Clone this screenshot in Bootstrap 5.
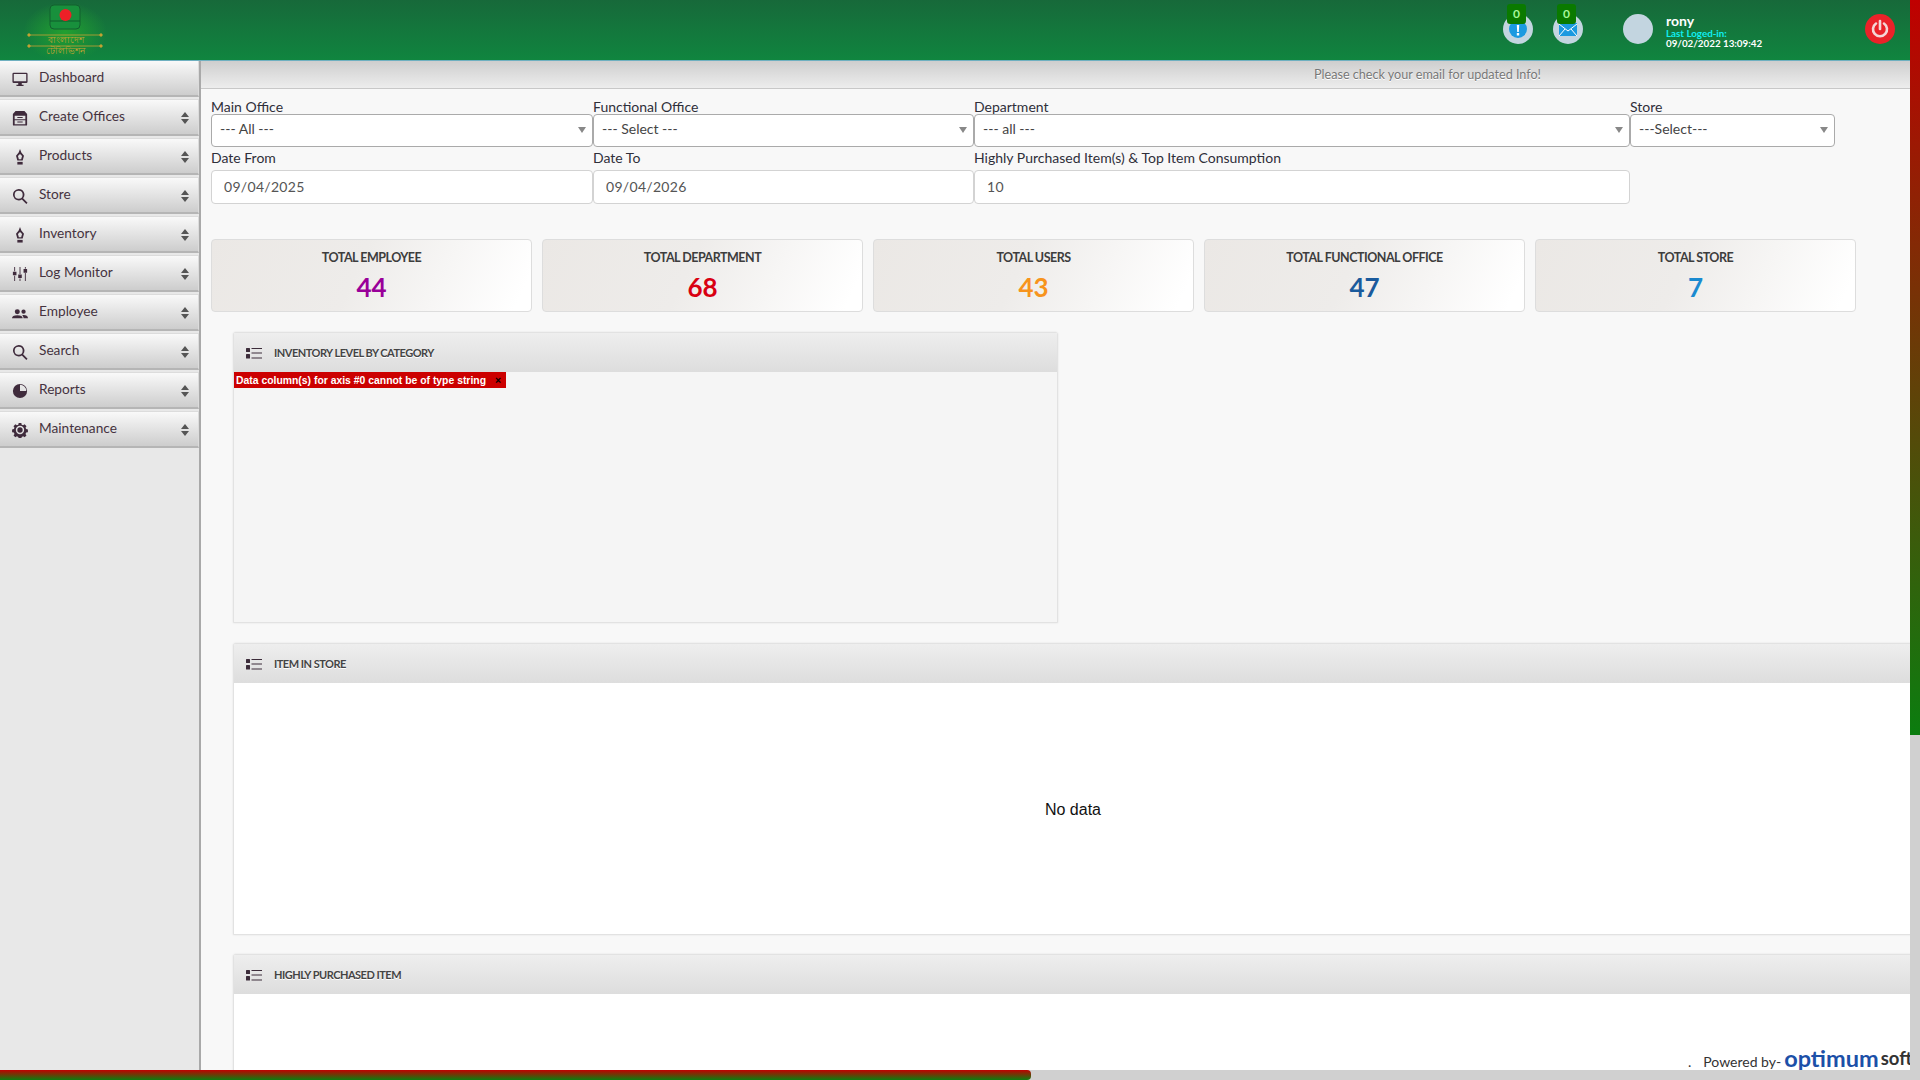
<!DOCTYPE html>
<html lang="en">
<head>
<meta charset="UTF-8">
<meta name="viewport" content="width=device-width, initial-scale=1.0">
<title>Dashboard</title>
<link href="https://cdn.jsdelivr.net/npm/bootstrap@5.3.0/dist/css/bootstrap.min.css" rel="stylesheet">
<style>
    html, body { height: 100%; overflow: hidden; }
    body { font-family: Lato, "Noto Sans", "Liberation Sans", sans-serif; font-size: 14px; color: #333; background: #f8f8f8; }
    .app-shell { height: 1080px; width: 1920px; }
    .app-left { width: 1910px; }
    .app-body { height: 1010px; min-height: 0; }

    /* header */
    .top-head { height: 60px; background: linear-gradient(#17693a, #10853f); box-shadow: 0 1px 0 #6fb0c0; position: relative; z-index: 2; }
    .logo-box { width: 110px; margin-left: 14px; }
    .head-right { margin-right: 15px; padding-bottom: 2px; }
    .head-ico { width: 30px; height: 30px; border-radius: 50%; background: #c3d5e0; position: relative; }
    .gap-alert { margin-right: 20px; }
    .gap-mail { margin-right: 40px; }
    .ico-count { position: absolute; top: -10px; left: 4px; width: 19px; height: 20px; background: #0a7a00; color: #a5f59a; font-size: 12px; font-weight: 700; line-height: 20px; text-align: center; border-radius: 3px; }
    .user-txt { width: 154px; margin-left: 13px; color: #fff; font-weight: 700; font-size: 9.8px; line-height: 10px; margin-right: 45px; margin-top: 3px; }
    .user-txt .uname { font-size: 14px; line-height: 14px; }
    .user-txt .ulabel { color: #10eef0; }
    .power-btn { width: 30px; height: 30px; border-radius: 50%; background: #ea2229; }

    /* sidebar */
    .side-col { width: 201px; flex: none; background: #e8e8e8; border-right: 2px solid #a9a9a9; }
    .side-item { height: 37px; margin-bottom: 2px; padding: 0 9px 1px 12px; background: linear-gradient(#f9f9f9, #cdcdcd); border: 1px solid #dcdcdc; border-bottom: 2px solid #b5b5b5; border-left: 0; color: #45333f; font-size: 13.7px; text-decoration: none; }
    .side-ico { width: 16px; height: 16px; margin: 2px 11px 0 0; flex: none; fill: #3f2b3c; }
    .side-arrows { margin: 2px 0 0 auto; width: 8px; height: 12px; fill: #555; }

    /* main */
    .main-col { min-width: 0; overflow: hidden; position: relative; }
    .notice-bar { height: 29px; line-height: 30px; text-align: right; padding-right: 369px; font-size: 12.6px; color: #777; background: linear-gradient(#cdcdcd, #ededed); border-bottom: 1px solid #c8c8c8; text-shadow: 0 1px 0 #fff; }
    .filter-grid { display: grid; grid-template-columns: 382px 381px 656px 205px; margin: 11px 0 0 10px; }
    .filter-grid label { font-size: 14px; line-height: 14px; color: #2f2f3a; display: block; }
    .filter-grid .date-lbl { line-height: 22px; padding-bottom: 1px; }
    .filter-grid .form-select, .filter-grid .form-control { font-size: 14px; color: #444; border-radius: 4px; }
    .filter-grid .form-select { height: 33px; padding: 0 24px 4px 8px; border: 1px solid #aaa; background-size: 0; background-image: linear-gradient(#fff, #fff); }
    .sel-wrap { position: relative; }
    .sel-wrap::after { content: ""; position: absolute; right: 7px; top: 13px; border: 4.5px solid transparent; border-top: 6px solid #888; border-bottom: 0; }
    .filter-grid .form-control { height: 34px; padding: 0 12px 2px; border: 1px solid #d3d3d3; letter-spacing: .3px; color: #555; }

    .stat-wrap { margin: 35px 0 0 10px; gap: 10px; }
    .stat-box { width: 321px; height: 73px; flex: none; border: 1px solid #ddd; border-radius: 4px; background: linear-gradient(115deg, #ebe8e5, #eeecea 45%, #fff 95%); text-align: center; padding-top: 8px; }
    .stat-ttl { font-size: 12.5px; letter-spacing: -.5px; font-weight: 700; line-height: 20px; color: #3d3d3d; text-transform: uppercase; }
    .stat-num { font-size: 26px; font-weight: 700; line-height: 32px; margin-top: 3px; }

    .pane { margin: 0 0 19px 32px; border: 1px solid #e2e2e2; border-radius: 3px 3px 0 0; box-shadow: 0 0 2px #ddd; flex: none; }
    .pane .card-header { height: 39px; padding: 1px 0 0 12px; background: linear-gradient(#eee, #ddd); border: 0; border-radius: 0; font-size: 11px; letter-spacing: -.5px; font-weight: 700; color: #444; text-transform: uppercase; text-shadow: 0 1px 0 #fff; }
    .pane-ico { width: 16px; height: 11px; margin-right: 12px; fill: #3c2c3a; }
    .pane-small { width: 825px; height: 291px; margin-top: 20px; margin-bottom: 20px; background: #f5f5f5; }
    .pane-wide { width: 1680px; height: 292px; background: #fff; }
    .pane-last { height: 240px; margin-bottom: 0; }
    .err-box { width: 272px; height: 16px; background: #c00; color: #fff; font: 700 10.4px/17px "Liberation Sans", sans-serif; padding-left: 2px; }
    .err-x { color: #000; margin-right: 5px; }
    .no-data { font: 16px "Liberation Sans", sans-serif; color: #111; padding-top: 3px; }

    .powered { position: absolute; right: 0; bottom: 0; height: 24px; font-size: 14px; line-height: 17px; color: #333; white-space: nowrap; background: #fff; width: 222px; }
    .powered-dot { margin-right: 12px; }
    .o-blue { color: #1c50a8; font: 700 23.5px/20px Lato, sans-serif; margin: 2px 0 0 3px; }
    .o-dark { color: #333; font: 700 18.5px/20px Lato, sans-serif; margin: 2px 0 0 2px; }
    .powered-txt { margin-top: 7px; }

    /* fake scrollbars */
    .vbar { width: 10px; flex: none; background: #d0d0d0; }
    .vbar-thumb { height: 735px; background: linear-gradient(#c00000, #0b7d0f); }
    .hbar { height: 10px; background: #d0d0d0; }
    .hbar-thumb { width: 1031px; height: 100%; background: linear-gradient(#c00000, #0b7d0f); border-radius: 0 4px 4px 0; }
</style>
</head>
<body>
<svg width="0" height="0" class="position-absolute">
    <symbol id="i-monitor" viewBox="0 0 18 18"><path d="M2 2h14a1.5 1.5 0 0 1 1.5 1.5v8.500a1.500 1.500 0 0 1-1.500 1.500h-14a1.500 1.500 0 0 1-1.500-1.500v-8.500a1.500 1.500 0 0 1 1.500-1.500zm0 1.500v8h14v-8z"/><path d="M7 13.500h4v2h2v1.500h-8v-1.500h2z"/></symbol>
    <symbol id="i-cabinet" viewBox="0 0 18 18"><path fill-rule="evenodd" d="M4 1h10l3 3.500v12a1 1 0 0 1-1 1h-14a1 1 0 0 1-1-1v-12zM3 6.500v4h12v-4zM3 11.500v4.500h12v-4.500z"/><path d="M6 8h6v1h-6zM6 13h6v1h-6z"/></symbol>
    <symbol id="i-pen" viewBox="0 0 18 18"><path fill-rule="evenodd" d="M9 0l1.500 4 3 3.500-1.500 5.500h-6l-1.500-5.500 3-3.500zM9 5.500l-2.300 2.500 1 3.500h2.600l1-3.500z"/><path d="M6 14.500h6v3h-6z"/></symbol>
    <symbol id="i-search" viewBox="0 0 18 18"><path fill-rule="evenodd" d="M7.500 1a6.500 6.500 0 0 1 5 10.600l5 5-1.400 1.400-5-5a6.500 6.500 0 1 1-3.600-12zm0 2a4.500 4.500 0 1 0 0 9 4.500 4.500 0 0 0 0-9z"/></symbol>
    <symbol id="i-sliders" viewBox="0 0 18 18"><path d="M2.500 1h1v5h-1zM2.500 11h1v6h-1zM1 6.500h4v4h-4zM8.500 1h1v8h-1zM8.500 14h1v3h-1zM7 9.500h4v4h-4zM14.500 1h1v2h-1zM14.500 8h1v9h-1zM13 3.500h4v4h-4z"/></symbol>
    <symbol id="i-people" viewBox="0 0 18 18"><circle cx="6" cy="7.500" r="2.800"/><circle cx="13" cy="7.500" r="2.400"/><path d="M0 15c0-2.500 2-3.500 6-3.500s6 1 6 3.500zM13 15c0-1.500-.5-2.500-1.500-3.500 3.500-.5 6.500.5 6.500 3.500z"/></symbol>
    <symbol id="i-pie" viewBox="0 0 18 18"><path d="M9 1a8 8 0 1 1-8 8 8 8 0 0 1 8-8zM9 2v7h7a7 7 0 0 0-7-7z" fill-rule="evenodd"/></symbol>
    <symbol id="i-gear" viewBox="0 0 18 18"><path fill-rule="evenodd" d="M7.500 1h3l.4 2 1.600.7 1.700-1.100 2.100 2.100-1.100 1.700.7 1.600 2 .4v3l-2 .4-.7 1.600 1.100 1.700-2.100 2.100-1.700-1.100-1.600.7-.4 2h-3l-.4-2-1.600-.7-1.700 1.100-2.100-2.100 1.100-1.700-.7-1.600-2-.4v-3l2-.4.700-1.600-1.100-1.700 2.100-2.100 1.700 1.100 1.600-.7zM9 4.300a4.700 4.700 0 1 0 0 9.400 4.700 4.700 0 0 0 0-9.400zM9 6a3 3 0 1 1 0 6 3 3 0 0 1 0-6z"/></symbol>
    <symbol id="i-arrows" viewBox="0 0 8 12"><path d="M4 0l4 5h-8zM4 12l-4-5h8z"/></symbol>
    <symbol id="i-list" viewBox="0 0 16 11"><rect width="4" height="4" rx=".5"/><rect y="6" width="4" height="4.500" rx=".5"/><path d="M5.500 0h10.500v1h-10.500zM5.500 4.500h10.500v1h-10.500zM5.500 9.500h10.500v1h-10.500z"/></symbol>
</svg>

<div class="app-shell d-flex">
    <div class="app-left d-flex flex-column">
        <header class="top-head d-flex align-items-center">
            <div class="logo-box">
                <svg width="110" height="60" viewBox="0 0 110 60">
                    <defs><radialGradient id="glow"><stop offset="0" stop-color="#22a030"/><stop offset="1" stop-color="#22a030" stop-opacity="0"/></radialGradient></defs>
                    <ellipse cx="51" cy="32" rx="42" ry="30" fill="url(#glow)"/>
                    <rect x="36" y="5" width="30" height="24" rx="4" fill="#18903c" stroke="#12602f"/>
                    <path d="M36 21h30" stroke="#0f5a2b"/>
                    <circle cx="51.500" cy="15" r="6" fill="#ee2027"/>
                    <g stroke="#c5a233" fill="#c5a233">
                        <path d="M15 35h72M15 46h72" stroke-width=".8"/>
                        <circle cx="15" cy="35" r="1.200"/><circle cx="87" cy="35" r="1.200"/>
                        <circle cx="15" cy="46" r="1.200"/><circle cx="87" cy="46" r="1.200"/>
                    </g>
                    <text x="51.500" y="43" text-anchor="middle" font-size="9" fill="#c5a233" font-family="Noto Sans, sans-serif">বাংলাদেশ</text>
                    <text x="51.500" y="54" text-anchor="middle" font-size="9" fill="#c5a233" font-family="Noto Sans, sans-serif">টেলিভিশন</text>
                </svg>
            </div>
            <div class="head-right ms-auto d-flex align-items-center">
                <div class="head-ico gap-alert d-flex align-items-center justify-content-center">
                    <span class="ico-count">0</span>
                    <svg width="18" height="18" viewBox="0 0 18 18"><circle cx="9" cy="9" r="9" fill="#1b9ae0"/><path d="M7.800 5h2.400l-.4 7h-1.600zM7.800 13h2.400v2.400h-2.400z" fill="#fff"/></svg>
                </div>
                <div class="head-ico gap-mail d-flex align-items-center justify-content-center">
                    <span class="ico-count">0</span>
                    <svg width="18" height="14" viewBox="0 0 18 14"><rect width="18" height="13" y="1" fill="#1b9ae0"/><path d="M0 2l9 7 9-7M0 14l6-7M18 14l-6-7" stroke="#fff" fill="none"/></svg>
                </div>
                <div class="head-ico"></div>
                <div class="user-txt">
                    <div class="uname">rony</div>
                    <div class="ulabel">Last Loged-in:</div>
                    <div>09/02/2022 13:09:42</div>
                </div>
                <div class="power-btn d-flex align-items-center justify-content-center">
                    <svg width="20" height="20" viewBox="0 0 20 20"><path d="M6 4.500a7 7 0 1 0 8 0" fill="none" stroke="#f4d6d6" stroke-width="2.600" stroke-linecap="round"/><path d="M10 2v8" stroke="#f4d6d6" stroke-width="2.600" stroke-linecap="round"/></svg>
                </div>
            </div>
        </header>

        <div class="app-body d-flex">
            <nav class="side-col">
                <div class="d-flex flex-column">
                    <a href="#" class="side-item d-flex align-items-center"><svg class="side-ico"><use href="#i-monitor"/></svg>Dashboard</a>
                    <a href="#" class="side-item d-flex align-items-center"><svg class="side-ico"><use href="#i-cabinet"/></svg>Create Offices<svg class="side-arrows"><use href="#i-arrows"/></svg></a>
                    <a href="#" class="side-item d-flex align-items-center"><svg class="side-ico"><use href="#i-pen"/></svg>Products<svg class="side-arrows"><use href="#i-arrows"/></svg></a>
                    <a href="#" class="side-item d-flex align-items-center"><svg class="side-ico"><use href="#i-search"/></svg>Store<svg class="side-arrows"><use href="#i-arrows"/></svg></a>
                    <a href="#" class="side-item d-flex align-items-center"><svg class="side-ico"><use href="#i-pen"/></svg>Inventory<svg class="side-arrows"><use href="#i-arrows"/></svg></a>
                    <a href="#" class="side-item d-flex align-items-center"><svg class="side-ico"><use href="#i-sliders"/></svg>Log Monitor<svg class="side-arrows"><use href="#i-arrows"/></svg></a>
                    <a href="#" class="side-item d-flex align-items-center"><svg class="side-ico"><use href="#i-people"/></svg>Employee<svg class="side-arrows"><use href="#i-arrows"/></svg></a>
                    <a href="#" class="side-item d-flex align-items-center"><svg class="side-ico"><use href="#i-search"/></svg>Search<svg class="side-arrows"><use href="#i-arrows"/></svg></a>
                    <a href="#" class="side-item d-flex align-items-center"><svg class="side-ico"><use href="#i-pie"/></svg>Reports<svg class="side-arrows"><use href="#i-arrows"/></svg></a>
                    <a href="#" class="side-item d-flex align-items-center"><svg class="side-ico"><use href="#i-gear"/></svg>Maintenance<svg class="side-arrows"><use href="#i-arrows"/></svg></a>
                </div>
            </nav>

            <main class="main-col flex-grow-1 d-flex flex-column">
                <div class="notice-bar">Please check your email for updated Info!</div>

                <form class="filter-grid">
                    <div><label>Main Office</label><div class="sel-wrap"><select class="form-select"><option>--- All ---</option></select></div></div>
                    <div><label>Functional Office</label><div class="sel-wrap"><select class="form-select"><option>--- Select ---</option></select></div></div>
                    <div><label>Department</label><div class="sel-wrap"><select class="form-select"><option>--- all ---</option></select></div></div>
                    <div><label>Store</label><div class="sel-wrap"><select class="form-select"><option>---Select---</option></select></div></div>
                    <div><label class="date-lbl">Date From</label><input class="form-control" value="09/04/2025"></div>
                    <div><label class="date-lbl">Date To</label><input class="form-control" value="09/04/2026"></div>
                    <div><label class="date-lbl">Highly Purchased Item(s) &amp; Top Item Consumption</label><input class="form-control" value="10"></div>
                </form>

                <div class="stat-wrap d-flex">
                    <div class="stat-box"><div class="stat-ttl">Total Employee</div><div class="stat-num" style="color:#990099">44</div></div>
                    <div class="stat-box"><div class="stat-ttl">Total Department</div><div class="stat-num" style="color:#d90012">68</div></div>
                    <div class="stat-box"><div class="stat-ttl">Total Users</div><div class="stat-num" style="color:#f7941d">43</div></div>
                    <div class="stat-box"><div class="stat-ttl">Total Functional Office</div><div class="stat-num" style="color:#1a5a9c">47</div></div>
                    <div class="stat-box"><div class="stat-ttl">Total Store</div><div class="stat-num" style="color:#1a8ad0">7</div></div>
                </div>

                <section class="card pane pane-small">
                    <div class="card-header d-flex align-items-center"><svg class="pane-ico"><use href="#i-list"/></svg>Inventory Level By Category</div>
                    <div class="err-box d-flex justify-content-between"><span>Data column(s) for axis #0 cannot be of type string</span><span class="err-x">×</span></div>
                </section>

                <section class="card pane pane-wide">
                    <div class="card-header d-flex align-items-center"><svg class="pane-ico"><use href="#i-list"/></svg>Item In Store</div>
                    <div class="no-data flex-grow-1 d-flex align-items-center justify-content-center">No data</div>
                </section>

                <section class="card pane pane-wide pane-last">
                    <div class="card-header d-flex align-items-center"><svg class="pane-ico"><use href="#i-list"/></svg>Highly Purchased Item</div>
                </section>

                <div class="powered d-flex"><span class="powered-dot powered-txt">.</span><span class="powered-txt">Powered by-</span><span class="o-blue">optimum</span><span class="o-dark">soft</span></div>
            </main>
        </div>

        <div class="hbar"><div class="hbar-thumb"></div></div>
    </div>
    <div class="vbar"><div class="vbar-thumb"></div></div>
</div>

<script src="https://cdn.jsdelivr.net/npm/bootstrap@5.3.0/dist/js/bootstrap.bundle.min.js"></script>
</body>
</html>
